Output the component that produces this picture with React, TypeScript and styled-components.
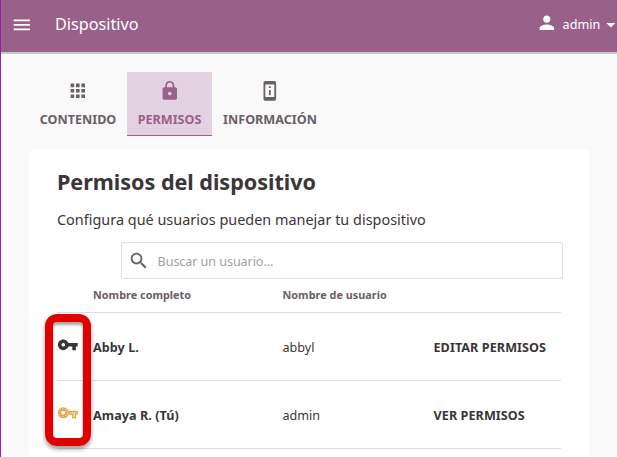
import React from "react";
import styled, { createGlobalStyle } from "styled-components";

const GlobalStyle = createGlobalStyle`
  * { box-sizing: border-box; }
  body {
    margin: 0;
    background: #f9f9f9;
    color: #3a3539;
    font-family: "Noto Sans", sans-serif;
    font-size: 12.6px;
    overflow: hidden;
  }
`;

const Page = styled.div`
  height: 457px;
  overflow: hidden;
  border-left: 1px solid #8e24a0;
  position: relative;
`;

const AppBar = styled.header`
  display: flex;
  align-items: center;
  height: 52px;
  padding: 0 0 3px 10.4px;
  background: #996189;
  color: #fff;
  box-shadow: 0 2px 0 #c8c8c8;
`;

const AppTitle = styled.div`
  flex: 1;
  margin-left: 22px;
  padding-bottom: 2px;
  font-size: 16.2px;
  line-height: 22px;
`;

const UserMenu = styled.div`
  display: flex;
  align-items: center;
  font-size: 12.6px;
  width: 81px;
  white-space: nowrap;
`;

const UserName = styled.span`
  width: 39px;
  margin-left: 5px;
`;

const Icon = styled.svg<{ $color?: string; $lift?: number }>`
  display: block;
  flex: none;
  width: 21.6px;
  height: 21.6px;
  fill: ${(p) => p.$color ?? "currentColor"};
  margin-top: ${(p) => -(p.$lift ?? 0)}px;
`;

const Tabs = styled.nav`
  display: flex;
  height: 64px;
  margin: 20px 0 14px 28px;
`;

const Tab = styled.div<{ $width: number; $active?: boolean }>`
  display: flex;
  flex-direction: column;
  align-items: center;
  width: ${(p) => p.$width}px;
  padding-top: 8px;
  gap: 9px;
  border-bottom: 1px solid ${(p) => (p.$active ? "#996189" : "transparent")};
  background: ${(p) => (p.$active ? "#e2d1e0" : "transparent")};
  color: ${(p) => (p.$active ? "#996189" : "#686066")};
  font-size: 12.6px;
  font-weight: 700;
  line-height: 18px;
  white-space: nowrap;
`;

const Card = styled.main`
  width: 560px;
  height: 340px;
  margin-left: 28px;
  padding: 17px 28px 0;
  border-radius: 4px;
  background: #fff;
`;

const Title = styled.h1`
  margin: 0;
  font-size: 21.6px;
  line-height: 29px;
  letter-spacing: -0.04px;
  white-space: nowrap;
`;

const Description = styled.p`
  margin: 13px 0 11px;
  font-size: 14.4px;
  line-height: 22px;
  letter-spacing: 0.02px;
  white-space: nowrap;
`;

const SearchBox = styled.div`
  display: flex;
  align-items: center;
  gap: 8px;
  width: 442px;
  height: 37px;
  margin-left: 64px;
  padding-left: 6px;
  border: 1px solid #dedede;
  border-radius: 2px;
  color: #a29fa1;
`;

const Placeholder = styled.span`
  padding-top: 2px;
  letter-spacing: -0.08px;
`;

const Row = styled.div<{ $head?: boolean }>`
  display: grid;
  grid-template-columns: 36px 189.5px 151px 1fr;
  align-items: center;
  width: 504px;
  height: ${(p) => (p.$head ? 34 : 68)}px;
  padding: ${(p) => (p.$head ? "0 0 2px" : "1px 0 0")};
  border-bottom: 1px solid #dedede;
  color: ${(p) => (p.$head ? "#686066" : "#3a3539")};
  font-size: ${(p) => (p.$head ? 10.8 : 12.6)}px;
  font-weight: ${(p) => (p.$head ? 700 : 400)};
  letter-spacing: ${(p) => (p.$head ? 0.04 : 0)}px;
  white-space: nowrap;
`;

const Strong = styled.span`
  font-weight: 700;
  letter-spacing: 0.07px;
`;

const Highlight = styled.div`
  position: absolute;
  left: 44px;
  top: 314px;
  width: 46px;
  height: 132px;
  border: 8px solid #e00000;
  border-radius: 12px;
  box-shadow: 0 3px 4px rgba(0, 0, 0, 0.4), inset 0 3px 3px rgba(0, 0, 0, 0.35);
`;

const paths = {
  menu: "M3 18h18v-2H3v2zm0-5h18v-2H3v2zm0-7v2h18V6H3z",
  person: "M12 12c2.21 0 4-1.79 4-4s-1.79-4-4-4-4 1.79-4 4 1.79 4 4 4zm0 2c-2.67 0-8 1.34-8 4v2h16v-2c0-2.66-5.33-4-8-4z",
  drop: "M7 10l5 5 5-5z",
  apps: "M4 8h4V4H4v4zm6 12h4v-4h-4v4zm-6 0h4v-4H4v4zm0-6h4v-4H4v4zm6 0h4v-4h-4v4zm6-10v4h4V4h-4zm-6 4h4V4h-4v4zm6 6h4v-4h-4v4zm0 6h4v-4h-4v4z",
  lock: "M18 8h-1V6c0-2.76-2.24-5-5-5S7 3.24 7 6v2H6c-1.1 0-2 .9-2 2v10c0 1.1.9 2 2 2h12c1.1 0 2-.9 2-2V10c0-1.1-.9-2-2-2zm-6 9c-1.1 0-2-.9-2-2s.9-2 2-2 2 .9 2 2-.9 2-2 2zm3.1-9H8.9V6c0-1.71 1.39-3.1 3.1-3.1 1.71 0 3.1 1.39 3.1 3.1v2z",
  device: "M13 7h-2v2h2V7zm0 4h-2v6h2v-6zm4-9.99L7 1c-1.1 0-2 .9-2 2v18c0 1.1.9 2 2 2h10c1.1 0 2-.9 2-2V3c0-1.1-.9-1.99-2-1.99zM17 19H7V5h10v14z",
  search: "M15.5 14h-.79l-.28-.27C15.41 12.59 16 11.11 16 9.5 16 5.91 13.09 3 9.5 3S3 5.91 3 9.5 5.91 16 9.5 16c1.61 0 3.09-.59 4.23-1.57l.27.28v.79l5 4.99L20.49 19l-4.99-5zm-6 0C7.01 14 5 11.99 5 9.5S7.01 5 9.5 5 14 7.01 14 9.5 11.99 14 9.5 14z",
  key: "M12.65 10C11.83 7.67 9.61 6 7 6c-3.31 0-6 2.69-6 6s2.69 6 6 6c2.61 0 4.83-1.67 5.65-4H17v4h4v-4h2v-4H12.65zM7 14c-1.1 0-2-.9-2-2s.9-2 2-2 2 .9 2 2-.9 2-2 2z",
};

function Glyph({ name, color, lift }: { name: keyof typeof paths; color?: string; lift?: number }) {
  return (
    <Icon viewBox="0 0 24 24" $color={color} $lift={lift}>
      <path d={paths[name]} />
    </Icon>
  );
}

/* Outlined key with a beaded ring for the administrator. */
function AdminKey() {
  return (
    <Icon viewBox="0 0 24 24" $color="none" $lift={4}>
      <circle cx="7" cy="12" r="4.2" stroke="#e3a046" strokeWidth="3.8" />
      <circle cx="7" cy="12" r="4.3" stroke="#fff2d8" strokeWidth="1.3" strokeDasharray="0.9 1.8" />
      <path d="M12.6 10.6h9.8v2.8h-2v4h-2.8v-4h-5" stroke="#e3a046" strokeWidth="1.5" />
      <path d="M12.2 12h9" stroke="#e3a046" strokeWidth="1.3" strokeDasharray="1.8 0.9" />
    </Icon>
  );
}

const users = [
  { name: "Abby L.", login: "abbyl", action: "EDITAR PERMISOS", admin: false },
  { name: "Amaya R. (Tú)", login: "admin", action: "VER PERMISOS", admin: true },
];

export default function App() {
  return (
    <Page>
      <GlobalStyle />
      <AppBar>
        <Glyph name="menu" />
        <AppTitle>Dispositivo</AppTitle>
        <UserMenu>
          <Glyph name="person" lift={3} />
          <UserName>admin</UserName>
          <Glyph name="drop" />
        </UserMenu>
      </AppBar>
      <Tabs>
        <Tab $width={98}><Glyph name="apps" />CONTENIDO</Tab>
        <Tab $width={85} $active><Glyph name="lock" />PERMISOS</Tab>
        <Tab $width={116}><Glyph name="device" />INFORMACIÓN</Tab>
      </Tabs>
      <Card>
        <Title>Permisos del dispositivo</Title>
        <Description>Configura qué usuarios pueden manejar tu dispositivo</Description>
        <SearchBox>
          <Glyph name="search" color="#686066" />
          <Placeholder>Buscar un usuario...</Placeholder>
        </SearchBox>
        <Row $head>
          <span />
          <span>Nombre completo</span>
          <span>Nombre de usuario</span>
          <span />
        </Row>
        {users.map((user) => (
          <Row key={user.login}>
            {user.admin ? <AdminKey /> : <Glyph name="key" color="#3a3539" lift={4} />}
            <Strong>{user.name}</Strong>
            <span>{user.login}</span>
            <Strong>{user.action}</Strong>
          </Row>
        ))}
      </Card>
      <Highlight />
    </Page>
  );
}
